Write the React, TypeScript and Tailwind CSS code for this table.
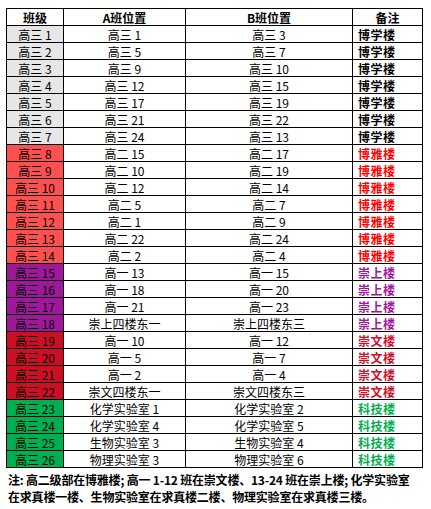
type Row = {
  cls: string;
  a: string;
  b: string;
};

type Group = {
  building: string;
  cellBg: string;
  text: string;
  rows: Row[];
};

const groups: Group[] = [
  {
    building: "博学楼",
    cellBg: "bg-[#e6e6e6]",
    text: "text-black",
    rows: [
      { cls: "高三 1", a: "高三 1", b: "高三 3" },
      { cls: "高三 2", a: "高三 5", b: "高三 7" },
      { cls: "高三 3", a: "高三 9", b: "高三 10" },
      { cls: "高三 4", a: "高三 12", b: "高三 15" },
      { cls: "高三 5", a: "高三 17", b: "高三 19" },
      { cls: "高三 6", a: "高三 21", b: "高三 22" },
      { cls: "高三 7", a: "高三 24", b: "高三 13" },
    ],
  },
  {
    building: "博雅楼",
    cellBg: "bg-[#ff5050]",
    text: "text-[#ff0000]",
    rows: [
      { cls: "高三 8", a: "高二 15", b: "高二 17" },
      { cls: "高三 9", a: "高二 10", b: "高二 19" },
      { cls: "高三 10", a: "高二 12", b: "高二 14" },
      { cls: "高三 11", a: "高二 5", b: "高二 7" },
      { cls: "高三 12", a: "高二 1", b: "高二 9" },
      { cls: "高三 13", a: "高二 22", b: "高二 24" },
      { cls: "高三 14", a: "高二 2", b: "高二 4" },
    ],
  },
  {
    building: "崇上楼",
    cellBg: "bg-[#a0189a]",
    text: "text-[#a0189a]",
    rows: [
      { cls: "高三 15", a: "高一 13", b: "高一 15" },
      { cls: "高三 16", a: "高一 18", b: "高一 20" },
      { cls: "高三 17", a: "高一 21", b: "高一 23" },
      { cls: "高三 18", a: "崇上四楼东一", b: "崇上四楼东三" },
    ],
  },
  {
    building: "崇文楼",
    cellBg: "bg-[#cc1024]",
    text: "text-[#d0102a]",
    rows: [
      { cls: "高三 19", a: "高一 10", b: "高一 12" },
      { cls: "高三 20", a: "高一 5", b: "高一 7" },
      { cls: "高三 21", a: "高一 2", b: "高一 4" },
      { cls: "高三 22", a: "崇文四楼东一", b: "崇文四楼东三" },
    ],
  },
  {
    building: "科技楼",
    cellBg: "bg-[#00b050]",
    text: "text-[#00b050]",
    rows: [
      { cls: "高三 23", a: "化学实验室 1", b: "化学实验室 2" },
      { cls: "高三 24", a: "化学实验室 4", b: "化学实验室 5" },
      { cls: "高三 25", a: "生物实验室 3", b: "生物实验室 4" },
      { cls: "高三 26", a: "物理实验室 3", b: "物理实验室 6" },
    ],
  },
];

const font = { fontFamily: '"Noto Sans CJK SC", "Liberation Sans", sans-serif' };

export default function App() {
  return (
    <div className="h-[509px] w-[431px] bg-white pl-[6px] pt-[8px] text-black" style={font}>
      <table className="w-[416px] table-fixed border-collapse border border-black text-[12px] leading-[15px]">
        <colgroup>
          <col className="w-[57px]" />
          <col className="w-[122px]" />
          <col className="w-[167px]" />
          <col className="w-[70px]" />
        </colgroup>
        <thead>
          <tr className="h-[17px] font-bold">
            <th className="border border-black p-0 text-center">班级</th>
            <th className="border border-black p-0 text-center">A班位置</th>
            <th className="border border-black p-0 text-center">B班位置</th>
            <th className="border border-black p-0 text-center">备注</th>
          </tr>
        </thead>
        <tbody>
          {groups.map((g) =>
            g.rows.map((r) => (
              <tr key={r.cls} className="h-[17px]">
                <td className={`border border-black p-0 text-center ${g.cellBg}`}>{r.cls}</td>
                <td className="border border-black p-0 text-center">{r.a}</td>
                <td className="border border-black p-0 text-center">{r.b}</td>
                <td className={`border border-black p-0 pl-[5px] text-left font-bold tracking-[0.5px] ${g.text}`}>
                  {g.building}
                </td>
              </tr>
            ))
          )}
        </tbody>
      </table>
      <p className="mt-[3px] whitespace-nowrap pl-[2px] text-[12px] font-bold leading-[17px] tracking-[-0.2px]">
        注: 高二级部在博雅楼; 高一 1-12 班在崇文楼、13-24 班在崇上楼; 化学实验室
        <br />
        在求真楼一楼、生物实验室在求真楼二楼、物理实验室在求真楼三楼。
      </p>
    </div>
  );
}
